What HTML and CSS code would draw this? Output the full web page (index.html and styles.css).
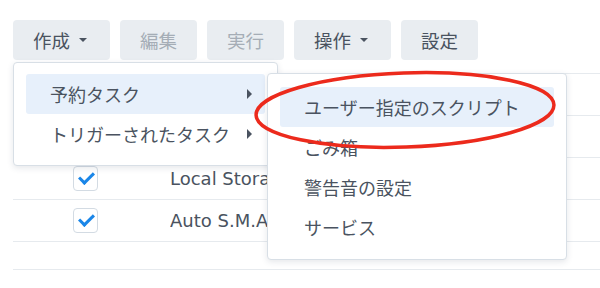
FILE: index.html
```html
<!DOCTYPE html>
<html lang="ja">
<head>
    <meta charset="UTF-8">
    <title>タスクスケジューラ</title>
    <link rel="stylesheet" href="styles.css">
</head>
<body>

    <div class="toolbar">
        <button class="btn">作成<span class="caret"></span></button>
        <button class="btn" disabled>編集</button>
        <button class="btn" disabled>実行</button>
        <button class="btn">操作<span class="caret"></span></button>
        <button class="btn">設定</button>
    </div>

    <!-- task list behind the menus -->
    <table class="grid">
        <tr class="head"><td class="check"></td><td></td></tr>
        <tr><td class="check"></td><td></td></tr>
        <tr><td class="check"><span class="box"></span></td><td><span class="name">Local Storage Status</span></td></tr>
        <tr><td class="check"><span class="box"></span></td><td><span class="name">Auto S.M.A.R.T. Test</span></td></tr>
        <tr class="tail"><td class="check"></td><td></td></tr>
    </table>

    <!-- 作成 dropdown -->
    <ul class="menu main-menu">
        <li class="item active">予約タスク<span class="arrow"></span></li>
        <li class="item">トリガーされたタスク<span class="arrow"></span></li>
    </ul>

    <ul class="menu sub-menu">
        <li class="item active">ユーザー指定のスクリプト</li>
        <li class="item">ごみ箱</li>
        <li class="item">警告音の設定</li>
        <li class="item">サービス</li>
    </ul>

    <svg class="mark" width="600" height="288" viewBox="0 0 600 288">
        <ellipse cx="405" cy="110" rx="149" ry="37" transform="rotate(-2 405 110)" />
    </svg>

</body>
</html>
```

FILE: styles.css
```css
body {
    margin: 0;
    width: 600px;
    height: 288px;
    overflow: hidden;
    background: #fff;
    color: #4a5360;
    font-family: "DejaVu Sans", "Noto Sans CJK JP", sans-serif;
    font-size: 18px;
    position: relative;
}
.toolbar {
    display: flex;
    gap: 10px;
    padding: 20px 13px 0;
}
.btn {
    height: 40px;
    padding: 0 20px;
    border: none;
    border-radius: 4px;
    background-color: #e9edf1;
    color: #4a5360;
    font-family: "Noto Sans CJK JP", sans-serif;
    font-size: 18.5px;
    display: flex;
    align-items: center;
}
.btn:disabled {
    color: #a5adb6;
}
.caret {
    width: 0;
    height: 0;
    margin: 0 3px 0 9px;
    border-left: 4px solid transparent;
    border-right: 4px solid transparent;
    border-top: 4px solid #4a5360;
}
.grid {
    margin: 13px 0 0 13px;
    width: 587px;
    border-collapse: collapse;
}
.grid td {
    height: 41px;
    padding: 0;
    border-top: 1px solid #e6eaee;
}
.grid .tail td {
    height: 27px;
    border-bottom: 1px solid #e6eaee;
}
.grid .check {
    width: 157px;
    padding-left: 60px;
    box-sizing: border-box;
}
.name {
    display: block;
    width: 97px;
    overflow: hidden;
    white-space: nowrap;
}
.box {
    display: block;
    width: 23px;
    height: 23px;
    border: 1px solid #d3dbe3;
    border-radius: 4px;
    position: relative;
}
.box::after {
    content: "";
    position: absolute;
    left: 8px;
    top: 2px;
    width: 6px;
    height: 12px;
    border-right: 3px solid #1a86e8;
    border-bottom: 3px solid #1a86e8;
    transform: rotate(45deg);
}
.menu {
    position: absolute;
    margin: 0;
    list-style: none;
    background: #fff;
    border: 1px solid #d8dfe6;
    border-radius: 4px;
    box-shadow: 0 2px 6px rgba(40, 60, 80, 0.12);
    font-family: "Noto Sans CJK JP", sans-serif;
}
.main-menu {
    left: 13px;
    top: 62px;
    width: 239px;
    padding: 11px 12px;
}
.sub-menu {
    left: 267px;
    top: 73px;
    width: 274px;
    padding: 13px 12px 12px 12px;
}
.item {
    height: 40px;
    padding-left: 24px;
    border-radius: 3px;
    display: flex;
    align-items: center;
    position: relative;
}
.item.active {
    background-color: #e7f0fb;
}
.arrow {
    position: absolute;
    left: 221px;
    top: 15px;
    width: 0;
    height: 0;
    border-top: 5px solid transparent;
    border-bottom: 5px solid transparent;
    border-left: 5px solid #4a5360;
}
.mark {
    position: absolute;
    left: 0;
    top: 0;
    pointer-events: none;
}
.mark ellipse {
    fill: none;
    stroke: #ec2a1c;
    stroke-width: 3.5;
}
```
